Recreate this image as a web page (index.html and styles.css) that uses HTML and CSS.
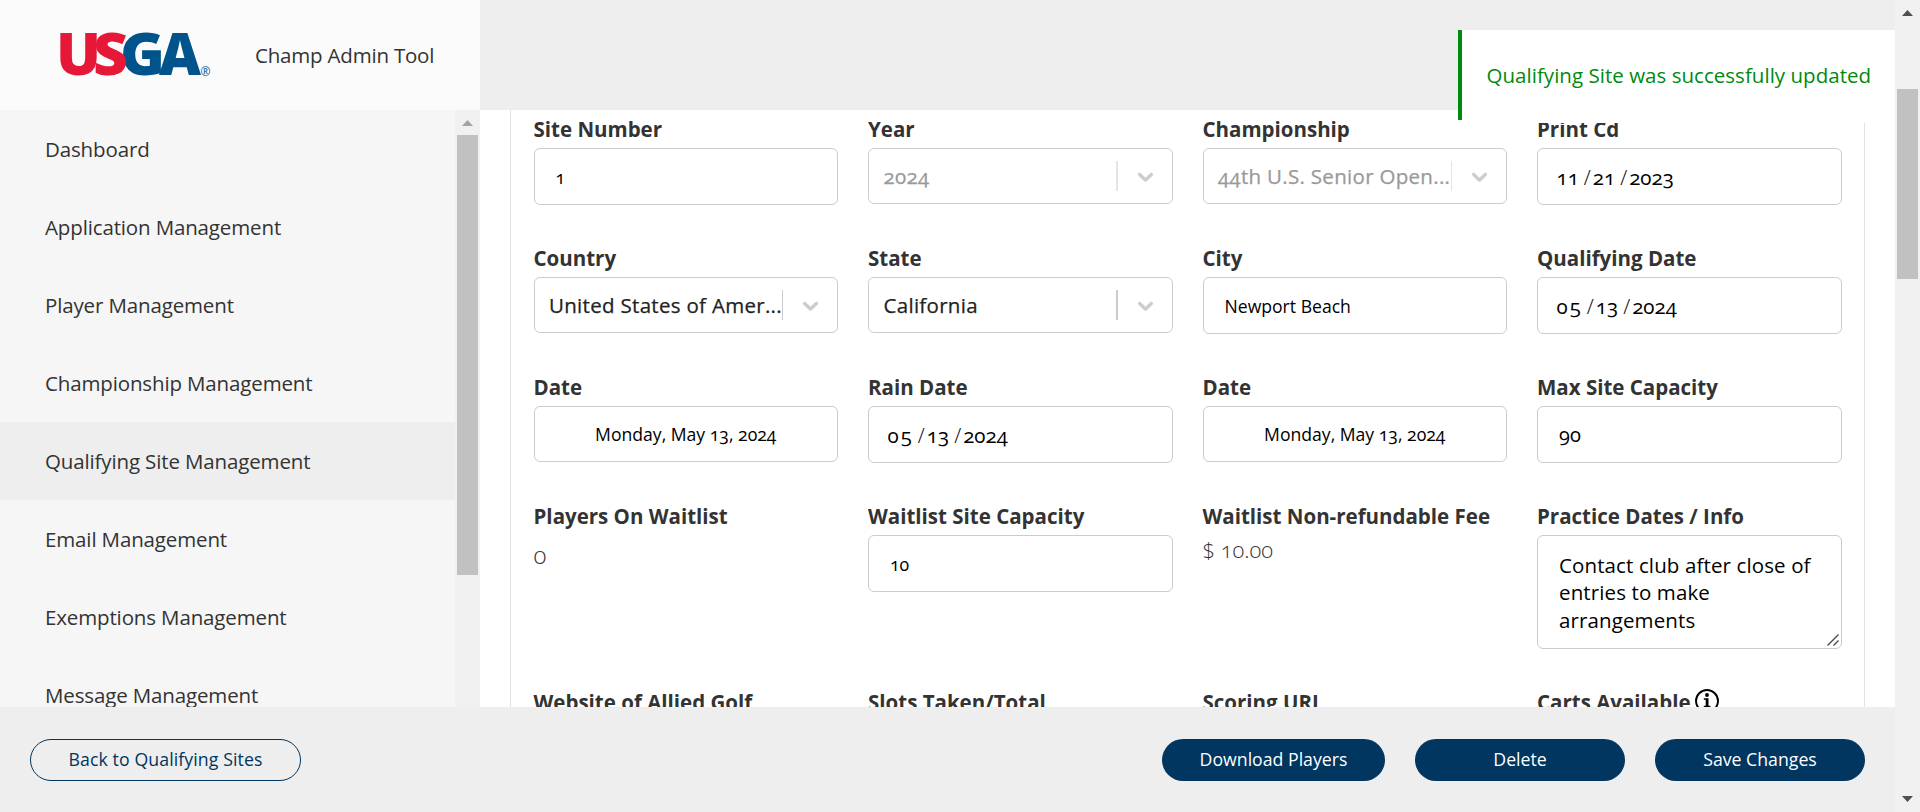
FILE: index.html
```html
<!DOCTYPE html>
<html lang="en">
<head>
<meta charset="utf-8">
<title>Champ Admin Tool</title>
<link rel="stylesheet" href="styles.css">
</head>
<body>
<div class="page">
  <header class="header">
    <div class="brand">
      <svg class="logo" width="152" height="46" viewBox="0 0 152 46" role="img" aria-label="USGA">
        <g class="logo-blue">
          <text x="60" y="43.4" textLength="45" lengthAdjust="spacingAndGlyphs">G</text>
          <text x="99" y="43.4" textLength="42" lengthAdjust="spacingAndGlyphs">A</text>
        </g>
        <g class="logo-red">
          <text x="-4" y="43.4" textLength="45" lengthAdjust="spacingAndGlyphs">U</text>
          <text x="33" y="43.4" textLength="35" lengthAdjust="spacingAndGlyphs">S</text>
        </g>
        <text class="logo-reg" x="140.500" y="43.500">®</text>
      </svg>
      <span class="title">Champ Admin Tool</span>
    </div>
  </header>

  <div class="body">
    <aside class="sidebar">
      <nav class="nav">
        <a class="nav-item">Dashboard</a>
        <a class="nav-item">Application Management</a>
        <a class="nav-item">Player Management</a>
        <a class="nav-item">Championship Management</a>
        <a class="nav-item active">Qualifying Site Management</a>
        <a class="nav-item">Email Management</a>
        <a class="nav-item">Exemptions Management</a>
        <a class="nav-item">Message Management</a>
      </nav>
      <div class="scroll side-scroll">
        <svg class="arrow light" width="11" height="6" viewBox="0 0 11 6"><path d="M5.500 0L11 6H0z"/></svg>
        <div class="thumb"></div>
      </div>
    </aside>

    <main class="main">
      <div class="card">
        <div class="field"><label>Site Number</label><div class="input">1</div></div>
        <div class="field"><label>Year</label><div class="select disabled"><span class="value">2024</span><i class="sep wide"></i><svg class="chev" width="25" height="25" viewBox="0 0 20 20"><path d="M4.516 7.548c0.436-0.446 1.043-0.481 1.576 0l3.908 3.747 3.908-3.747c0.533-0.481 1.141-0.446 1.574 0 0.436 0.445 0.408 1.197 0 1.615-0.406 0.418-4.695 4.502-4.695 4.502-0.217 0.223-0.502 0.335-0.787 0.335s-0.570-0.112-0.789-0.335c0 0-4.287-4.084-4.695-4.502s-0.436-1.170 0-1.615z"/></svg></div></div>
        <div class="field"><label>Championship</label><div class="select disabled"><span class="value">44th U.S. Senior Open...</span><i class="sep"></i><svg class="chev" width="25" height="25" viewBox="0 0 20 20"><path d="M4.516 7.548c0.436-0.446 1.043-0.481 1.576 0l3.908 3.747 3.908-3.747c0.533-0.481 1.141-0.446 1.574 0 0.436 0.445 0.408 1.197 0 1.615-0.406 0.418-4.695 4.502-4.695 4.502-0.217 0.223-0.502 0.335-0.787 0.335s-0.570-0.112-0.789-0.335c0 0-4.287-4.084-4.695-4.502s-0.436-1.170 0-1.615z"/></svg></div></div>
        <div class="field"><label>Print Cd</label><div class="input date"><span>11</span><span class="slash">/</span><span>21</span><span class="slash">/</span><span class="year">2023</span></div></div>

        <div class="field"><label>Country</label><div class="select"><span class="value">United States of Amer...</span><i class="sep"></i><svg class="chev" width="25" height="25" viewBox="0 0 20 20"><path d="M4.516 7.548c0.436-0.446 1.043-0.481 1.576 0l3.908 3.747 3.908-3.747c0.533-0.481 1.141-0.446 1.574 0 0.436 0.445 0.408 1.197 0 1.615-0.406 0.418-4.695 4.502-4.695 4.502-0.217 0.223-0.502 0.335-0.787 0.335s-0.570-0.112-0.789-0.335c0 0-4.287-4.084-4.695-4.502s-0.436-1.170 0-1.615z"/></svg></div></div>
        <div class="field"><label>State</label><div class="select"><span class="value">California</span><i class="sep wide"></i><svg class="chev" width="25" height="25" viewBox="0 0 20 20"><path d="M4.516 7.548c0.436-0.446 1.043-0.481 1.576 0l3.908 3.747 3.908-3.747c0.533-0.481 1.141-0.446 1.574 0 0.436 0.445 0.408 1.197 0 1.615-0.406 0.418-4.695 4.502-4.695 4.502-0.217 0.223-0.502 0.335-0.787 0.335s-0.570-0.112-0.789-0.335c0 0-4.287-4.084-4.695-4.502s-0.436-1.170 0-1.615z"/></svg></div></div>
        <div class="field"><label>City</label><div class="input">Newport Beach</div></div>
        <div class="field"><label>Qualifying Date</label><div class="input date"><span class="month">05</span><span class="slash">/</span><span>13</span><span class="slash">/</span><span class="year">2024</span></div></div>

        <div class="field"><label>Date</label><div class="input readonly">Monday, May 13, 2024</div></div>
        <div class="field"><label>Rain Date</label><div class="input date"><span class="month">05</span><span class="slash">/</span><span>13</span><span class="slash">/</span><span class="year">2024</span></div></div>
        <div class="field"><label>Date</label><div class="input readonly">Monday, May 13, 2024</div></div>
        <div class="field"><label>Max Site Capacity</label><div class="input number">90</div></div>

        <div class="field"><label>Players On Waitlist</label><div class="plain count">0</div></div>
        <div class="field"><label>Waitlist Site Capacity</label><div class="input">10</div></div>
        <div class="field"><label>Waitlist Non-refundable Fee</label><div class="plain">$ 10.00</div></div>
        <div class="field"><label>Practice Dates / Info</label><div class="textarea">Contact club after close of entries to make arrangements<svg class="grip" width="12" height="12" viewBox="0 0 12 12"><path d="M.5 11.500L11.500.5M6.500 11.500L11.500 6.500"/></svg></div></div>

        <div class="field"><label>Website of Allied Golf</label></div>
        <div class="field"><label>Slots Taken/Total</label></div>
        <div class="field"><label>Scoring URL</label></div>
        <div class="field"><label>Carts Available<svg class="info" width="24" height="24" viewBox="0 0 24 24"><circle cx="12" cy="12" r="11" fill="none" stroke="#000" stroke-width="1.900"/><circle cx="12" cy="6" r="1.900"/><path d="M8.800 9.200h4.700v7.600h1.900v1.500H8.800v-1.500h1.900v-6.100H8.800z"/></svg></label></div>
      </div>
    </main>
  </div>

  <footer class="footer">
    <button class="btn outline">Back to Qualifying Sites</button>
    <div class="actions">
      <button class="btn download">Download Players</button>
      <button class="btn">Delete</button>
      <button class="btn">Save Changes</button>
    </div>
  </footer>
</div>
<div class="scroll page-scroll">
  <svg class="arrow" width="11" height="6" viewBox="0 0 11 6"><path d="M5.500 0L11 6H0z"/></svg>
  <div class="thumb"></div>
  <svg class="arrow bottom" width="11" height="6" viewBox="0 0 11 6"><path d="M0 0h11L5.500 6z"/></svg>
</div>
<div class="toast"><div class="toast-body">Qualifying Site was successfully updated</div></div>
</body>
</html>
```
FILE: styles.css
```css
* { box-sizing: border-box; }
body {
  margin: 0;
  height: 812px;
  display: flex;
  overflow: hidden;
  position: relative;
  background: #fff;
  color: #333;
  font: 20.5px/28px "Open Sans", "Noto Sans", sans-serif;
  font-variant-numeric: oldstyle-nums;
}
.page { width: 1895px; height: 812px; display: flex; flex-direction: column; }

.header { height: 110px; flex: none; background: #eee; }
.brand { width: 480px; height: 110px; padding: 0 0 0 60px; background: #fbfbfb; display: flex; align-items: center; gap: 43px; }
.logo { display: block; overflow: visible; }
.logo text { font: 800 58px "Open Sans", sans-serif; }
.logo-blue { fill: #00538b; }
.logo-red { fill: #e51937; }
.logo .logo-reg { font: 12px "Open Sans", sans-serif; fill: #00538b; }
.title { letter-spacing: -.2px; }

.body { height: 597px; flex: none; display: flex; overflow: hidden; }
.sidebar { width: 480px; display: flex; overflow: hidden; background: #f6f6f6; }
.nav { width: 455px; }
.nav-item { display: flex; align-items: center; height: 78px; padding: 0 0 1px 45px; letter-spacing: -.14px; }
.nav-item.active { background: #eee; }

.scroll { width: 25px; background: #f1f1f1; display: flex; flex-direction: column; align-items: center; flex: none; }
.scroll .thumb { width: 21px; background: #c1c1c1; }
.arrow { display: block; fill: #505050; margin-top: 10px; }
.arrow.light { fill: #a3a3a3; }
.side-scroll .thumb { height: 440px; margin-top: 9px; }
.page-scroll { height: 812px; }
.page-scroll .thumb { height: 190px; margin-top: 73px; }
.arrow.bottom { margin-top: auto; margin-bottom: 10px; }

.main { width: 1415px; padding: 0 30px; overflow: hidden; }
.card {
  width: 1355px;
  height: 640px;
  padding: 4px 22.500px 0;
  border: solid #e2e2e2;
  border-width: 0 1px;
  display: grid;
  grid-template-columns: repeat(4, 1fr);
  grid-template-rows: 129px 129px 129px 186px 60px;
  column-gap: 30px;
}
.field { min-width: 0; }
label { display: flex; height: 34px; padding-top: 1px; line-height: 28px; font-weight: 700; white-space: nowrap; }
.input, .select, .textarea { border: 1px solid #ccc; border-radius: 6px; background: #fff; }
.input { height: 57px; display: flex; align-items: center; padding: 1px 21px 0; font-size: 17.600px; color: #000; }
.input.date { padding-left: 18.500px; font-size: 20.500px; padding-top: 1px; }
.date .slash { margin: 0 2px 0 5px; font-weight: 300; }
.date .month { letter-spacing: 2px; margin-right: -1px; }
.input.readonly { height: 56px; justify-content: center; padding-top: 0; }
.input.number { font-size: 20px; }
.select { height: 56px; display: flex; align-items: center; padding: 0 14px 0 14.500px; }
.select .value { flex: 1; min-width: 0; white-space: nowrap; letter-spacing: .3px; color: #222; -webkit-text-stroke: .25px currentColor; }
.sep { width: 1px; height: 30px; margin-right: 15.500px; background: #ccc; flex: none; }
.sep.wide { width: 2px; margin-right: 15px; }
.chev { fill: #ccc; stroke: #ccc; stroke-width: .6; flex: none; }
.select.disabled .value { color: #999; }
.disabled .sep { background: #e5e5e5; }
.textarea { height: 114px; padding: 15.500px 18px 0 21px; color: #000; letter-spacing: .12px; line-height: 27.500px; position: relative; }
.grip { position: absolute; right: 2px; bottom: 2px; fill: none; stroke: #444; stroke-width: 1.300; }
.plain { font-size: 22px; font-weight: 300; line-height: 28px; }
.plain.count { padding-top: 6px; font-size: 24px; }
.info { flex: none; margin: 1px 0 0 4px; }

.footer { flex: 1; background: #eee; padding: 32px 30px 0; display: flex; justify-content: space-between; align-items: flex-start; }
.actions { display: flex; gap: 30px; }
.btn { width: 210px; height: 42px; padding: 0 0 2px; border: 0; border-radius: 21px; background: #00365f; color: #fff; font: 17.700px "Open Sans", sans-serif; }
.btn.download { width: 223px; }
.btn.outline { width: 271px; border: 1px solid #00365f; background: none; color: #00365f; letter-spacing: .1px; }

/* Notification pinned to the top right of the page area */
.toast { position: absolute; top: 30px; left: 1458px; width: 437px; height: 93px; background: #fff; }
.toast-body { height: 90px; border-left: 4px solid #008a0e; padding: 31px 0 0 24.500px; color: #008a0e; letter-spacing: .03px; white-space: nowrap; }
```
